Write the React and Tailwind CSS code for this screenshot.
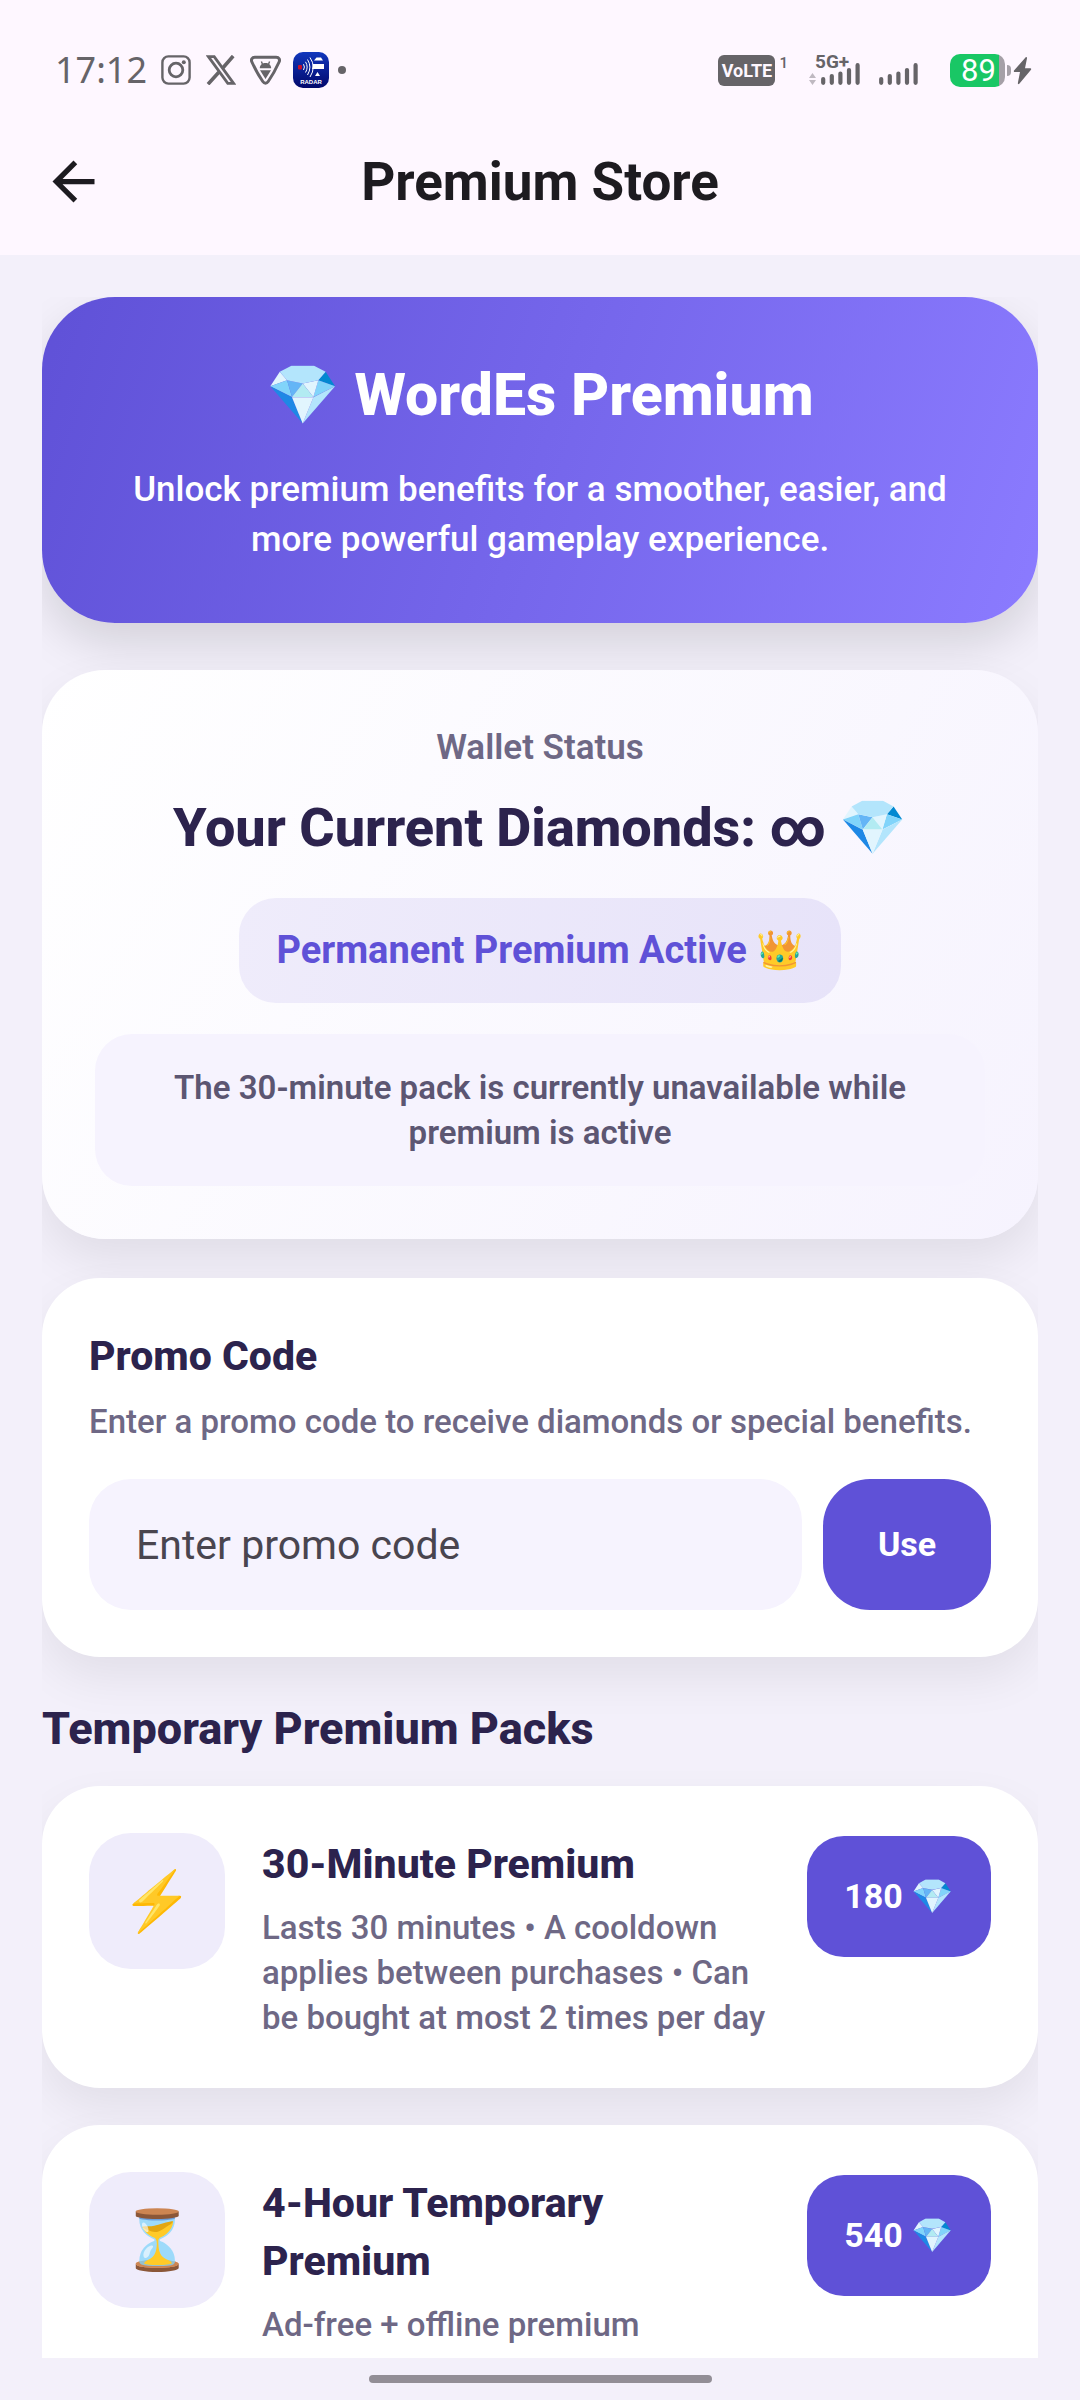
const packs = [
  {
    id: 'minutes-30',
    icon: '⚡',
    title: '30-Minute Premium',
    description: 'Lasts 30 minutes • A cooldown applies between purchases • Can be bought at most 2 times per day',
    price: 180,
  },
  {
    id: 'hours-4',
    icon: '⏳',
    title: '4-Hour Temporary Premium',
    description: 'Ad-free + offline premium',
    price: 540,
  },
];

function NotificationIcons() {
  return (
    <div className="flex items-center">
      <svg className="size-[30px]" viewBox="0 0 30 30" fill="none" stroke="#666468" strokeWidth="2.4">
        <rect x="1.4" y="1.4" width="27.2" height="27.2" rx="6" />
        <circle cx="15" cy="15" r="6.8" strokeWidth="2.8" />
        <circle cx="22.8" cy="7.2" r="2" fill="#666468" stroke="none" />
      </svg>
      <svg className="ml-[15px] size-[30px]" viewBox="0 0 30 30" fill="none" stroke="#666468" strokeWidth="2.8">
        <path d="M2.400 1.600H8.200L27.600 28.400H21.800Z" />
        <path d="M27.200 1L17 12.800M12.800 17.200L2 29.200" strokeWidth="3.600" />
      </svg>
      <svg className="ml-[14px] h-[30px] w-[31px]" viewBox="0 0 31 30" fill="none">
        <path d="M4.8 2.2H26.2C29 2.2 30.2 4.6 29.1 7C26.2 13.4 22.4 20.4 18.2 26.5C16.6 28.8 14.4 28.8 12.8 26.5C8.6 20.4 4.8 13.4 1.9 7C.8 4.6 2 2.2 4.8 2.2Z" stroke="#666468" strokeWidth="3" />
        <path d="M9.8 13.200C9.8 6.200 21.200 6.200 21.200 13.200ZM10 15.200H21L15.500 24Z" fill="#666468" />
        <path d="M12.400 9L11.400 6.400M18.600 9L19.600 6.400" stroke="#666468" strokeWidth="1.400" />
      </svg>
      <svg className="ml-[12px] size-[36px]" viewBox="0 0 36 36">
        <defs>
          <linearGradient id="radar" x1="0" y1="0" x2="0" y2="1">
            <stop stopColor="#1137bd" />
            <stop offset="1" stopColor="#02086b" />
          </linearGradient>
        </defs>
        <rect width="36" height="36" rx="10" fill="url(#radar)" />
        <rect x="5" y="13" width="4" height="4.500" rx="1" fill="#c40f2e" />
        <g fill="none" stroke="#fff" strokeWidth="1">
          <path d="M10.500 12.200Q12.300 15 10.500 18" />
          <path d="M12.500 9.800Q15.800 15 12.500 20.500" />
          <path d="M14.500 7.500Q19.300 15 14.500 23" />
          <path d="M17 5.500Q23.500 15 17 25" />
        </g>
        <path d="M21 8.500L23.500 5.500H28L30 8.500ZM20 12H31V17H19ZM22 24L24.500 20L27 24Z" fill="#fff" />
        <text x="18" y="31.500" textAnchor="middle" fontSize="6" fontWeight="700" fill="#fff" fontFamily="Liberation Sans">RADAR</text>
      </svg>
      <span className="ml-[9px] size-2 rounded-full bg-[#666468]" />
    </div>
  );
}

function SignalBars() {
  return (
    <svg className="h-[22px] w-[39px]" viewBox="0 0 39 22" fill="none" stroke="#666468" strokeWidth="4.200" strokeLinecap="round">
      <path d="M2.200 16V19.800M10.800 13V19.800M19.400 10.500V19.800M28 7V19.800M36.600 2.200V19.800" />
    </svg>
  );
}

function StatusBar() {
  return (
    <div className="flex h-[140px] items-center justify-between pl-[55px] pr-[48px] text-[#666468]">
      <div className="flex items-center gap-[14px]">
        <span className="font-['Noto_Sans',sans-serif] text-[36px] leading-[40px]">17:12</span>
        <NotificationIcons />
      </div>
      <div className="flex items-center">
        <span className="flex h-[31px] w-[57px] items-center justify-center rounded-md bg-[#666468] text-[18px] font-bold text-[#fef7ff]">VoLTE</span>
        <span className="ml-1 self-start text-[15px] font-medium leading-[18px]">1</span>
        <div className="ml-[21px] flex h-[30px] items-end">
          <svg className="h-[12px] w-[7px]" viewBox="0 0 7 12" fill="#bfb9c1">
            <path d="M0 5L3.500 0L7 5ZM0 7H7L3.500 12Z" />
          </svg>
          <div className="relative ml-[5px] flex">
            <span className="absolute -left-[6px] -top-[10px] text-[19px] font-bold leading-[18px]">5G+</span>
            <SignalBars />
          </div>
          <div className="ml-[19px] flex">
            <SignalBars />
          </div>
        </div>
        <div className="ml-[32px] flex items-center">
          <div className="flex h-[33px] w-[55px] rounded-[10px] bg-[linear-gradient(90deg,#19c765_49px,#a5a0a7_49px)] pl-[11px] text-[31px] leading-[34px] text-white">89</div>
          <span className="ml-[2px] h-[11px] w-[4px] rounded-r-full bg-[#a5a0a7]" />
        </div>
        <svg className="ml-[2px] h-[29px] w-[19px]" viewBox="0 0 19 29" fill="#666468">
          <path d="M12.500 1.500L1 14.500C.5 15.300 1 16 1.800 16H7L4.800 27.200C4.700 28.300 5.700 28.500 6.300 27.700L18 13.800C18.500 13 18.200 12.300 17.300 12.300H12L14 2.200C14.100 1 13.200 .7 12.500 1.500Z" />
        </svg>
      </div>
    </div>
  );
}

function AppBar() {
  return (
    <div className="grid h-[115px] grid-cols-[150px_1fr_150px] items-start">
      <button type="button" aria-label="Back" className="ml-[42px] mt-[10px] size-[63px]">
        <svg viewBox="0 0 24 24" fill="#1d1b20">
          <path d="M20 11H7.830l5.590-5.590L12 4l-8 8 8 8 1.410-1.410L7.830 13H20v-2z" />
        </svg>
      </button>
      <h1 className="mt-[10px] text-center text-[53px] font-bold leading-[64px] text-[#1d1b20]">Premium Store</h1>
    </div>
  );
}

function HeroCard() {
  return (
    <section className="rounded-[73px] bg-[linear-gradient(108deg,#5f51d7,#8b7bff)] p-[58px] text-center text-white shadow-[0_21px_47px_rgba(0,0,0,0.13)]">
      <h2 className="text-[59px] font-extrabold leading-[80px]">💎 WordEs Premium</h2>
      <p className="mt-[30px] text-[35px] font-medium leading-[50px]">
        Unlock premium benefits for a smoother, easier, and more powerful gameplay experience.
      </p>
    </section>
  );
}

function WalletCard() {
  return (
    <section className="mt-[47px] flex flex-col items-center rounded-[63px] bg-[linear-gradient(120deg,#ffffff,#f6f3fe)] p-[53px] text-center shadow-[0_21px_47px_rgba(0,0,0,0.08)]">
      <p className="text-[35px] font-semibold leading-[50px] text-[#6e6885]">Wallet Status</p>
      <h2 className="mt-4 text-[54px] font-extrabold leading-[78px] text-[#2c234d]">Your Current Diamonds: ∞ 💎</h2>
      <p className="mt-[31px] rounded-[37px] bg-[linear-gradient(100deg,#efecfb,#e7e3f9)] px-[37px] py-[26px] text-[38px] font-bold leading-[53px] text-[#5f51d7]">
        Permanent Premium Active 👑
      </p>
      <p className="mt-[31px] w-full rounded-[37px] bg-[#f6f3fe] px-[60px] py-[31px] text-[33px] font-semibold leading-[45px] text-[#5c5672]">
        The 30-minute pack is currently unavailable while premium is active
      </p>
    </section>
  );
}

function PromoCard() {
  return (
    <section className="mt-[39px] rounded-[58px] bg-white p-[47px] shadow-[0_21px_47px_rgba(0,0,0,0.07)]">
      <h2 className="text-[41px] font-extrabold leading-[62px] text-[#2c234d]">Promo Code</h2>
      <p className="mt-[12px] text-[33px] font-medium leading-[45px] text-[#6e6885]">
        Enter a promo code to receive diamonds or special benefits.
      </p>
      <form className="mt-[35px] flex gap-[21px]" onSubmit={(event) => event.preventDefault()}>
        <input
          type="text"
          aria-label="Promo code"
          placeholder="Enter promo code"
          className="h-[131px] min-w-0 flex-1 rounded-[42px] bg-[#f6f3fe] px-[47px] text-[41px] text-[#2c234d] outline-none placeholder:text-[#49454f]"
        />
        <button type="submit" className="w-[168px] rounded-[47px] bg-[#5f51d7] text-[34px] font-bold text-white">Use</button>
      </form>
    </section>
  );
}

function PackCard({ pack }) {
  return (
    <article className="flex items-start rounded-[58px] bg-white p-[47px] shadow-[0_21px_47px_rgba(0,0,0,0.07)]">
      <div className="flex size-[136px] shrink-0 items-center justify-center rounded-[42px] bg-[#efecfb] text-[58px]">{pack.icon}</div>
      <div className="ml-[37px] mt-[2px] min-h-[206px] min-w-0 flex-1">
        <h3 className="text-[41px] font-extrabold leading-[58px] text-[#2c234d]">{pack.title}</h3>
        <p className="mt-[12px] text-[33px] font-medium leading-[45px] text-[#6e6885]">{pack.description}</p>
      </div>
      <button type="button" className="ml-[37px] mt-[3px] h-[121px] w-[184px] shrink-0 rounded-[37px] bg-[#5f51d7] text-[34px] font-bold text-white">
        {pack.price} 💎
      </button>
    </article>
  );
}

export default function App() {
  return (
    <div className="flex h-screen flex-col overflow-hidden bg-[#f3f0fa] font-[Roboto,'Noto_Color_Emoji',sans-serif]">
      <header className="shrink-0 bg-[#fef7ff]">
        <StatusBar />
        <AppBar />
      </header>
      <main className="mx-[42px] mt-[42px] min-h-0 flex-1 overflow-hidden">
        <HeroCard />
        <WalletCard />
        <PromoCard />
        <h2 className="mt-[39px] text-[45px] font-extrabold leading-[66px] text-[#2c234d]">Temporary Premium Packs</h2>
        <div className="mt-6 flex flex-col gap-[37px]">
          {packs.map((pack) => <PackCard key={pack.id} pack={pack} />)}
        </div>
      </main>
      <footer className="flex h-[42px] shrink-0 items-center justify-center">
        <span className="h-[8px] w-[343px] rounded-full bg-[#928e96]" />
      </footer>
    </div>
  );
}
